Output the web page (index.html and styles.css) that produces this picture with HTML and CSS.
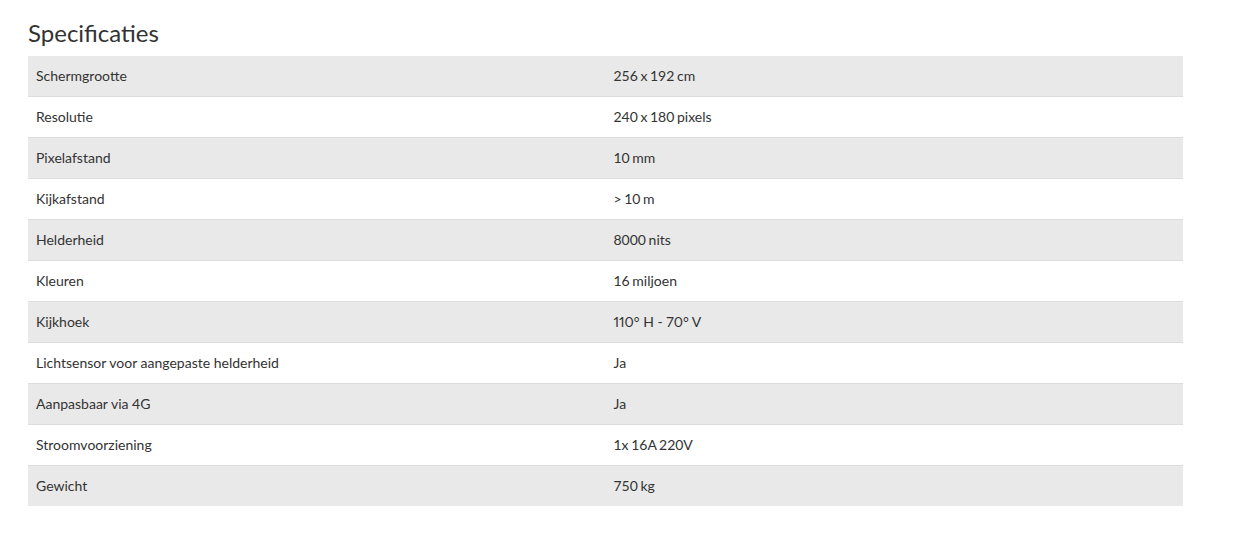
FILE: index.html
```html
<!DOCTYPE html>
<html lang="nl">
<head>
<meta charset="utf-8">
<link rel="stylesheet" href="styles.css">
</head>
<body>
<div class="page">
  <h2 class="title">Specificaties</h2>
  <table class="specs">
    <tbody>
      <tr><td>Schermgrootte</td><td class="val">256 x 192 cm</td></tr>
      <tr><td>Resolutie</td><td class="val">240 x 180 pixels</td></tr>
      <tr><td>Pixelafstand</td><td class="val">10 mm</td></tr>
      <tr><td>Kijkafstand</td><td class="val">&gt; 10 m</td></tr>
      <tr><td>Helderheid</td><td class="val">8000 nits</td></tr>
      <tr><td>Kleuren</td><td class="val">16 miljoen</td></tr>
      <tr><td>Kijkhoek</td><td class="val val-angle">110° H - 70° V</td></tr>
      <tr><td>Lichtsensor voor aangepaste helderheid</td><td class="val">Ja</td></tr>
      <tr><td>Aanpasbaar via 4G</td><td class="val">Ja</td></tr>
      <tr><td>Stroomvoorziening</td><td class="val">1x 16A 220V</td></tr>
      <tr><td>Gewicht</td><td class="val">750 kg</td></tr>
    </tbody>
  </table>
</div>
</body>
</html>
```

FILE: styles.css
```css
html, body {
  margin: 0;
  padding: 0;
  background: #fff;
}
body {
  font-family: Lato, "Open Sans", sans-serif;
  color: #333;
}
.page {
  padding: 20px 0 0 28px;
  width: 1155px;
}
.title {
  margin: 0 0 10px 0;
  font-size: 24px;
  line-height: 26px;
  font-weight: 400;
  color: #333;
}
.specs {
  width: 1155px;
  border-collapse: collapse;
  table-layout: fixed;
  font-size: 14px;
  line-height: 20px;
}
.specs td {
  padding: 10px 8px;
  border-top: 1px solid #ddd;
  vertical-align: top;
}
.specs .val {
  word-spacing: -1px;
}
.specs .val-angle {
  font-variant-numeric: proportional-nums;
  word-spacing: 0;
}
.specs tr:first-child td {
  border-top: none;
}
.specs tr:nth-child(odd) td {
  background: #e9e9e9;
}
```
